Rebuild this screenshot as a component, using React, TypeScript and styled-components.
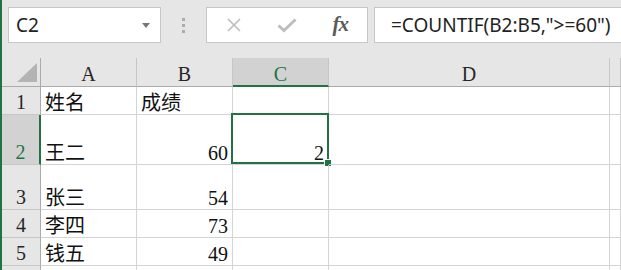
import React from "react";
import styled, { createGlobalStyle } from "styled-components";

const GREEN = "#217346";

const GlobalStyle = createGlobalStyle`
  html, body {
    margin: 0;
    padding: 0;
    background: #fff;
    overflow: hidden;
  }
`;

const Window = styled.div`
  height: 270px;
  border-left: 2px solid ${GREEN};
  background: #fff;
  overflow: hidden;
`;

const FormulaBar = styled.div`
  display: flex;
  height: 58px;
  padding: 7px 0 15px 6px;
  box-sizing: border-box;
  background: #e6e6e6;
`;

const NameBox = styled.div`
  display: flex;
  align-items: center;
  justify-content: space-between;
  width: 153px;
  padding: 0 10px 0 7px;
  box-sizing: border-box;
  background: #fff;
  border: 1px solid #c6c6c6;
  font-family: "Noto Sans", sans-serif;
  font-size: 19px;
  color: #222;
`;

const Grip = styled.div`
  display: flex;
  flex-direction: column;
  align-items: center;
  justify-content: center;
  gap: 3px;
  width: 45px;

  span {
    width: 3px;
    height: 3px;
    background: #ababab;
  }
`;

const ButtonGroup = styled.div`
  display: flex;
  width: 162px;
  background: #fff;
  border: 1px solid #c6c6c6;
  box-sizing: border-box;
`;

const BarButton = styled.div<{ $muted?: boolean }>`
  flex: 1;
  display: flex;
  align-items: center;
  justify-content: center;
  color: ${(p) => (p.$muted ? "#bdbdbd" : "#5a5a5a")};
`;

const Fx = styled.span`
  font-family: "Liberation Serif", serif;
  font-style: italic;
  font-weight: bold;
  font-size: 21px;
  letter-spacing: -1px;
  color: #5a5a5a;
  margin-bottom: 2px;
`;

const FormulaInput = styled.div`
  flex: 1;
  display: flex;
  align-items: center;
  margin-left: 6px;
  padding-left: 16px;
  background: #fff;
  border: 1px solid #c6c6c6;
  border-right: none;
  font-family: "Noto Sans", sans-serif;
  font-size: 19px;
  color: #222;
  white-space: nowrap;
`;

const Sheet = styled.div`
  display: grid;
  grid-template-columns: 39px 96px 96px 96px 281px 1fr;
  grid-template-rows: 29px 28px 50px 45px 28px 28px 28px;
  font-family: "Liberation Serif", "Noto Sans CJK SC", serif;
  font-size: 20px;
  line-height: 1;
`;

const CellBase = styled.div`
  display: flex;
  align-items: flex-end;
  box-sizing: border-box;
  padding-bottom: 1px;
  white-space: nowrap;
`;

const Corner = styled(CellBase)`
  justify-content: flex-end;
  padding: 0 3px 4px 0;
  background: #e6e6e6;
  border-right: 1px solid #ababab;
  border-bottom: 1px solid #ababab;
`;

const ColHeader = styled(CellBase)<{ $active?: boolean }>`
  justify-content: center;
  padding-bottom: ${(p) => (p.$active ? 1 : 2)}px;
  background: ${(p) => (p.$active ? "#d2d2d2" : "#e6e6e6")};
  color: ${(p) => (p.$active ? GREEN : "#262626")};
  border-right: 1px solid #c6c6c6;
  border-bottom: ${(p) => (p.$active ? `2px solid ${GREEN}` : "1px solid #ababab")};
`;

const RowHeader = styled(CellBase)<{ $active?: boolean }>`
  justify-content: center;
  padding-bottom: 2px;
  background: ${(p) => (p.$active ? "#d2d2d2" : "#e6e6e6")};
  color: ${(p) => (p.$active ? GREEN : "#262626")};
  border-right: ${(p) => (p.$active ? `2px solid ${GREEN}` : "1px solid #ababab")};
  border-bottom: 1px solid #c6c6c6;
`;

const Cell = styled(CellBase)<{ $numeric?: boolean }>`
  position: relative;
  justify-content: ${(p) => (p.$numeric ? "flex-end" : "flex-start")};
  padding: 0 4px 1px 4px;
  color: #111;
  border-right: 1px solid #d4d4d4;
  border-bottom: 1px solid #d4d4d4;
`;

const Selection = styled.div`
  position: absolute;
  top: -2px;
  left: -2px;
  right: -1px;
  bottom: 0;
  border: 2px solid ${GREEN};
  pointer-events: none;
`;

const FillHandle = styled.div`
  position: absolute;
  right: -5px;
  bottom: -5px;
  width: 6px;
  height: 6px;
  background: ${GREEN};
  border: 1px solid #fff;
`;

type Row = { n: number; label?: string; a?: string; b?: string | number; c?: number };

// row 6 only peeks in at the bottom edge, its label is off-screen
const rows: Row[] = [
  { n: 1, label: "1", a: "姓名", b: "成绩" },
  { n: 2, label: "2", a: "王二", b: 60, c: 2 },
  { n: 3, label: "3", a: "张三", b: 54 },
  { n: 4, label: "4", a: "李四", b: 73 },
  { n: 5, label: "5", a: "钱五", b: 49 },
  { n: 6 },
];

const columns = ["A", "B", "C", "D", ""];

const CloseIcon = () => (
  <svg width="16" height="16" viewBox="0 0 16 16">
    <path d="M2 2 L14 14 M14 2 L2 14" stroke="currentColor" strokeWidth="1.6" />
  </svg>
);

const CheckIcon = () => (
  <svg width="20" height="15" viewBox="0 0 20 15">
    <path d="M1.5 7.5 L7 12.5 L18.5 1.5" stroke="currentColor" strokeWidth="3" fill="none" />
  </svg>
);

const Caret = () => (
  <svg width="8" height="5" viewBox="0 0 8 5">
    <path d="M0 0 H8 L4 5 Z" fill="#767676" />
  </svg>
);

const CornerMark = () => (
  <svg width="20" height="19" viewBox="0 0 20 19">
    <path d="M20 0 V19 H0 Z" fill="#b4b4b4" />
  </svg>
);

const App = () => {
  const activeCol = "C";
  const activeRow = 2;

  return (
    <Window>
      <GlobalStyle />
      <FormulaBar>
        <NameBox>
          <span>C2</span>
          <Caret />
        </NameBox>
        <Grip>
          <span />
          <span />
          <span />
        </Grip>
        <ButtonGroup>
          <BarButton $muted>
            <CloseIcon />
          </BarButton>
          <BarButton $muted>
            <CheckIcon />
          </BarButton>
          <BarButton>
            <Fx>fx</Fx>
          </BarButton>
        </ButtonGroup>
        <FormulaInput>=COUNTIF(B2:B5,"&gt;=60")</FormulaInput>
      </FormulaBar>

      <Sheet>
        <Corner>
          <CornerMark />
        </Corner>
        {columns.map((col, i) => (
          <ColHeader key={i} $active={col === activeCol}>
            {col}
          </ColHeader>
        ))}

        {rows.map((row) => (
          <React.Fragment key={row.n}>
            <RowHeader $active={row.n === activeRow}>{row.label}</RowHeader>
            <Cell>{row.a}</Cell>
            <Cell $numeric={typeof row.b === "number"}>{row.b}</Cell>
            <Cell $numeric>
              {row.c}
              {row.n === activeRow && (
                <Selection>
                  <FillHandle />
                </Selection>
              )}
            </Cell>
            <Cell />
            <Cell />
          </React.Fragment>
        ))}
      </Sheet>
    </Window>
  );
};

export default App;
